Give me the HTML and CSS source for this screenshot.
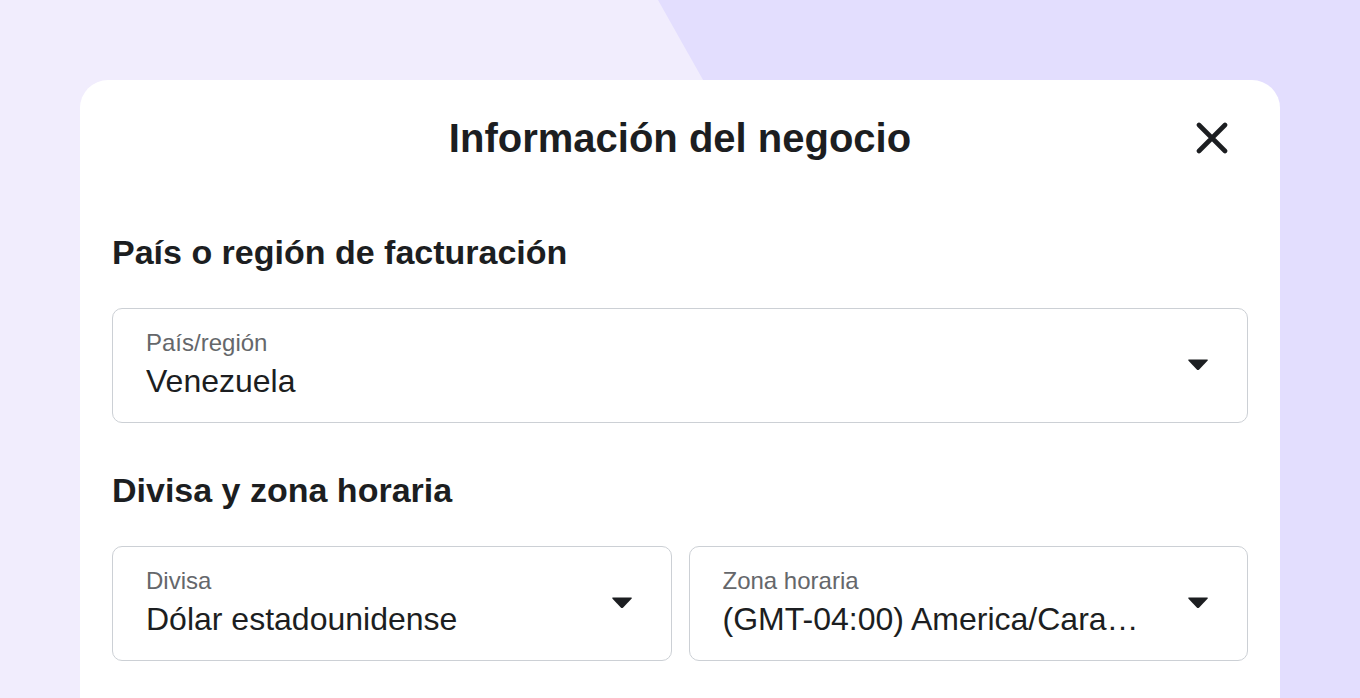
FILE: index.html
```html
<!DOCTYPE html>
<html lang="es">
<head>
<meta charset="utf-8">
<title>Información del negocio</title>
<link rel="stylesheet" href="styles.css">
</head>
<body>
<div class="page">
  <section class="dialog">
    <header class="dialog-header">
      <h1 class="dialog-title">Información del negocio</h1>
      <button class="close" type="button" aria-label="Cerrar">
        <svg width="32" height="32" viewBox="0 0 32 32"><path d="M3 3 L29 29 M29 3 L3 29" stroke="#1c1e21" stroke-width="4.6" stroke-linecap="round" fill="none"/></svg>
      </button>
    </header>

    <h2 class="section-title first">País o región de facturación</h2>
    <div class="select">
      <div class="select-text">
        <span class="select-label">País/región</span>
        <span class="select-value">Venezuela</span>
      </div>
      <svg class="caret" width="22" height="13" viewBox="0 0 22 13"><path d="M2 1.5 H20 Q21.5 1.5 20.5 2.8 L12.2 11.5 Q11 12.7 9.8 11.5 L1.5 2.8 Q0.5 1.5 2 1.5 Z" fill="#1c1e21"/></svg>
    </div>

    <h2 class="section-title">Divisa y zona horaria</h2>
    <div class="row">
      <div class="select">
        <div class="select-text">
          <span class="select-label">Divisa</span>
          <span class="select-value">Dólar estadounidense</span>
        </div>
        <svg class="caret" width="22" height="13" viewBox="0 0 22 13"><path d="M2 1.5 H20 Q21.5 1.5 20.5 2.8 L12.2 11.5 Q11 12.7 9.8 11.5 L1.5 2.8 Q0.5 1.5 2 1.5 Z" fill="#1c1e21"/></svg>
      </div>
      <div class="select">
        <div class="select-text">
          <span class="select-label">Zona horaria</span>
          <span class="select-value">(GMT-04:00) America/Caracas</span>
        </div>
        <svg class="caret" width="22" height="13" viewBox="0 0 22 13"><path d="M2 1.5 H20 Q21.5 1.5 20.5 2.8 L12.2 11.5 Q11 12.7 9.8 11.5 L1.5 2.8 Q0.5 1.5 2 1.5 Z" fill="#1c1e21"/></svg>
      </div>
    </div>
  </section>
</div>
</body>
</html>
```

FILE: styles.css
```css
html, body {
  margin: 0;
  padding: 0;
  height: 698px;
  overflow: hidden;
}
body {
  background: #f1edfd;
  font-family: "Liberation Sans", Arial, sans-serif;
  color: #1c1e21;
  position: relative;
}
body::before {
  content: "";
  position: absolute;
  inset: 0;
  background: #e3defe;
  clip-path: polygon(658px 0, 100% 0, 100% 100%, 1051px 100%);
}
.page {
  position: relative;
  padding: 80px 80px 0;
}
.dialog {
  background: #fff;
  border-radius: 28px 28px 0 0;
  height: 618px;
  padding: 28px 32px 0;
  box-sizing: border-box;
}
.dialog-header {
  position: relative;
  height: 60px;
  display: flex;
  align-items: center;
  justify-content: center;
}
.dialog-title {
  margin: 0;
  font-size: 40px;
  line-height: 60px;
  font-weight: 700;
}
.close {
  position: absolute;
  right: 20px;
  top: 14px;
  width: 32px;
  height: 32px;
  padding: 0;
  border: 0;
  background: none;
  display: flex;
}
.section-title {
  margin: 47px 0 36px;
  font-size: 34px;
  line-height: 40px;
  font-weight: 700;
}
.section-title.first {
  margin-top: 64px;
}
.select {
  border: 1px solid #ccd0d5;
  border-radius: 10px;
  height: 115px;
  box-sizing: border-box;
  padding: 19px 38px 0 33px;
  display: flex;
  align-items: flex-start;
  gap: 48px;
  min-width: 0;
}
.select-text {
  flex: 1;
  min-width: 0;
  display: flex;
  flex-direction: column;
}
.select-label {
  font-size: 24px;
  line-height: 30px;
  color: #65676b;
}
.select-value {
  font-size: 32px;
  line-height: 46px;
  white-space: nowrap;
  overflow: hidden;
  text-overflow: ellipsis;
}
.caret {
  margin-top: 30px;
  flex: none;
}
.row {
  display: grid;
  grid-template-columns: 1fr 1fr;
  gap: 17px;
}
```
